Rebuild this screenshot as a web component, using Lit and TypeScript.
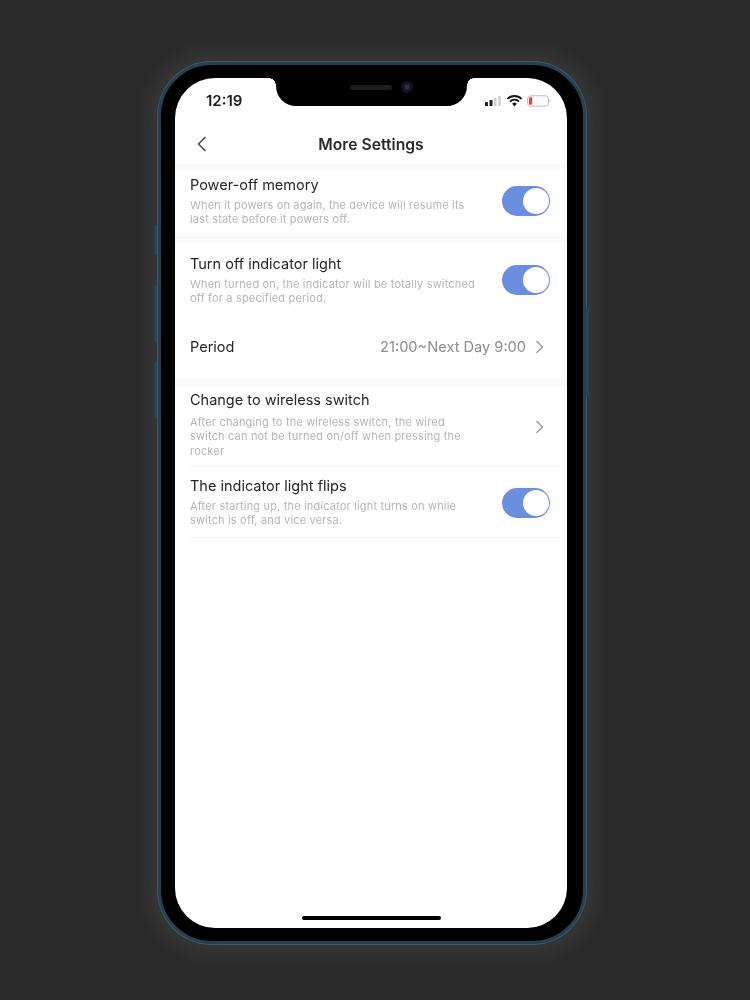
import { LitElement, html, css } from "lit";
import { customElement } from "lit/decorators.js";

const chevron = html`<svg class="chev" width="9" height="14" viewBox="0 0 9 14"><path d="M1.5 1 L7.5 7 L1.5 13" fill="none" stroke="#999" stroke-width="1.3"/></svg>`;

@customElement("app-root")
export class AppRoot extends LitElement {
  static styles = css`
    :host { display: block; width: 750px; height: 1000px; overflow: hidden; background: #2a2a2a;
      font-family: Inter, "Liberation Sans", Arial, sans-serif; }
    .page { display: flex; padding: 62px 0 0 158px; }
    .phone { position: relative; width: 428px; height: 882px; box-sizing: border-box; background: #000; border-radius: 54px;
      border: 3px solid #263f52; padding: 13px 16px 0 14px;
      box-shadow: 0 0 0 1px #3c5a6e, 0 0 26px 6px rgba(255, 255, 255, 0.09); }
    .btn { position: absolute; width: 3px; background: #2c4354; border-radius: 1px; }
    .b1 { left: -7px; top: 160px; height: 30px; }
    .b2 { left: -7px; top: 220px; height: 57px; }
    .b3 { left: -7px; top: 297px; height: 56px; }
    .b4 { right: -6px; top: 242px; height: 90px; }
    .screen { position: relative; width: 392px; height: 850px; background: #fff; border-radius: 40px; overflow: hidden; display: flex; flex-direction: column; filter: blur(0.35px); }
    .notch { position: absolute; left: 101px; top: 0; width: 191px; height: 28px; background: #000; border-radius: 0 0 20px 20px; }
    .notch::before, .notch::after { content: ""; position: absolute; top: 0; width: 7px; height: 7px; }
    .notch::before { left: -7px; background: radial-gradient(circle at 0 100%, transparent 6.5px, #000 7px); }
    .notch::after { right: -7px; background: radial-gradient(circle at 100% 100%, transparent 6.5px, #000 7px); }
    .speaker { position: absolute; left: 74px; top: 7px; width: 42px; height: 5px; border-radius: 3px; background: #1c1c1c; }
    .cam { position: absolute; left: 125px; top: 3px; width: 12px; height: 12px; border-radius: 50%; background: radial-gradient(circle, #2b2b5e 0 18%, #141418 40%, #0c0c0c 100%); }
    .status { height: 46px; display: flex; justify-content: space-between; align-items: flex-start; padding: 14px 16px 0 31px; box-sizing: border-box; }
    .time { font-size: 15px; font-weight: 600; color: #1a1a1a; line-height: 18px; }
    .icons { display: flex; align-items: center; gap: 4px; margin-top: 3px; }
    .nav { height: 40px; display: flex; align-items: center; justify-content: center; position: relative; }
    .back { position: absolute; left: 22px; top: 12px; }
    .title { font-size: 15.7px; font-weight: 600; color: #2a2a2a; }
    .band { height: 5px; background: #f9f9f9; }
    .band.b2h { height: 10px; background: #fafafa; }
    .band.b3h { height: 9px; }
    .row { display: flex; align-items: center; padding: 0 17px 0 15px; }
    .text { flex: 1; min-width: 0; }
    .name { font-size: 14.5px; line-height: 18px; color: #262626; }
    .desc { font-size: 11px; line-height: 13.5px; color: #b6b6b6; margin-top: 5px; letter-spacing: 0.17px; white-space: nowrap; }
    .desc.wide { line-height: 14.5px; margin-top: 5.75px; }
    .r1 { height: 64px; }
    .r2 { height: 74px; }
    .r3 { height: 59px; padding-bottom: 2px; }
    .r3 .name { flex: 1; }
    .r3 .chev { margin-left: 9px; }
    .r4 { height: 79px; }
    .r4 .text { margin-bottom: 4px; }
    .r5 { height: 70px; }
    .r5 .toggle { margin-top: 2px; }
    .value { font-size: 14.6px; color: #8c8c8c; }
    .chev { margin-left: 11px; margin-right: 6px; flex: none; }
    .line { height: 1px; background: #f4f4f4; margin: 0 6px 0 15px; }
    .toggle { width: 48px; height: 30px; border-radius: 15px; background: #6b8ee0; position: relative; flex: none; }
    .knob { position: absolute; right: 1.5px; top: 2px; width: 26px; height: 26px; border-radius: 50%; background: #fff; }
    .home { position: absolute; left: 127px; top: 838px; width: 139px; height: 4px; border-radius: 2px; background: #000; }
  `;

  private toggle() {
    return html`<div class="toggle"><div class="knob"></div></div>`;
  }

  render() {
    return html`
      <div class="page">
        <div class="phone">
          <div class="btn b1"></div><div class="btn b2"></div><div class="btn b3"></div><div class="btn b4"></div>
          <div class="screen">
            <div class="status">
              <span class="time">12:19</span>
              <div class="icons">
                <svg width="17" height="10" viewBox="0 0 17 10">
                  <rect x="0" y="6" width="3" height="4" rx="0.5" fill="#222"/>
                  <rect x="4.5" y="4" width="3" height="6" rx="0.5" fill="#222"/>
                  <rect x="9" y="2" width="2.6" height="8" rx="0.5" fill="#cfcfcf"/>
                  <rect x="13.2" y="0" width="2.6" height="10" rx="0.5" fill="#cfcfcf"/>
                </svg>
                <svg width="17" height="12" viewBox="0 0 15 11">
                  <path d="M1 3.6 A9.2 9.2 0 0 1 14 3.6" fill="none" stroke="#111" stroke-width="1.7"/>
                  <path d="M3.4 6 A5.8 5.8 0 0 1 11.6 6" fill="none" stroke="#111" stroke-width="1.7"/>
                  <path d="M5.4 8 L7.5 10.6 L9.6 8 A3 3 0 0 0 5.4 8 Z" fill="#111"/>
                </svg>
                <svg width="24" height="12" viewBox="0 0 24 12">
                  <rect x="0.5" y="0.8" width="21" height="10.4" rx="3" fill="none" stroke="#bdbdbd" stroke-width="1"/>
                  <rect x="2" y="2.3" width="3.2" height="7.4" rx="1" fill="#e8403a"/>
                  <path d="M22.6 4.2 A2 2 0 0 1 22.6 7.8 Z" fill="#bdbdbd"/>
                </svg>
              </div>
            </div>
            <div class="nav">
              <svg class="back" width="10" height="16" viewBox="0 0 10 16"><path d="M8.5 1 L1.5 8 L8.5 15" fill="none" stroke="#3a3a3a" stroke-width="1.3"/></svg>
              <span class="title">More Settings</span>
            </div>
            <div class="band"></div>
            <div class="row r1">
              <div class="text">
                <div class="name">Power-off memory</div>
                <div class="desc">When it powers on again, the device will resume its<br>last state before it powers off.</div>
              </div>
              ${this.toggle()}
            </div>
            <div class="band b2h"></div>
            <div class="row r2">
              <div class="text">
                <div class="name">Turn off indicator light</div>
                <div class="desc">When turned on, the indicator will be totally switched<br>off for a specified period.</div>
              </div>
              ${this.toggle()}
            </div>
            <div class="row r3">
              <div class="name">Period</div>
              <span class="value">21:00~Next Day 9:00</span>
              ${chevron}
            </div>
            <div class="band b3h"></div>
            <div class="row r4">
              <div class="text">
                <div class="name">Change to wireless switch</div>
                <div class="desc wide">After changing to the wireless switch, the wired<br>switch can not be turned on/off when pressing the<br>rocker</div>
              </div>
              ${chevron}
            </div>
            <div class="line"></div>
            <div class="row r5">
              <div class="text">
                <div class="name">The indicator light flips</div>
                <div class="desc">After starting up, the indicator light turns on while<br>switch is off, and vice versa.</div>
              </div>
              ${this.toggle()}
            </div>
            <div class="line"></div>
            <div class="home"></div>
            <div class="notch"><div class="speaker"></div><div class="cam"></div></div>
          </div>
        </div>
      </div>
    `;
  }
}
